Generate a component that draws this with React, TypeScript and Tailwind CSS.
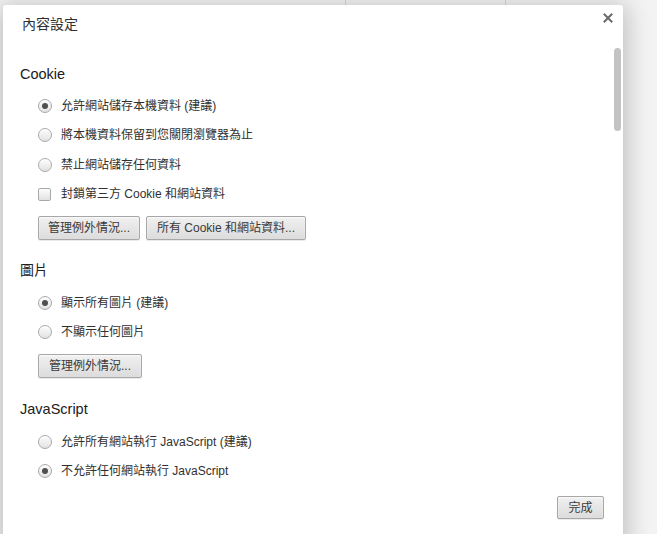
import React from "react";

const FONT = { fontFamily: '"Liberation Sans", Arial, "Noto Sans CJK TC", sans-serif' };

function Radio({ checked, label }: { checked?: boolean; label: string }) {
  return (
    <div className="flex h-[29.5px] items-center pl-[18px]">
      <span className="flex h-[14px] w-[14px] items-center justify-center rounded-full border border-[#a9a9a9] bg-gradient-to-b from-[#fdfdfd] to-[#e2e2e2] shadow-[inset_0_1px_1px_rgba(255,255,255,0.9)]">
        {checked && <span className="h-[6px] w-[6px] rounded-full bg-[#4f4f4f]" />}
      </span>
      <span className="ml-[9px] text-[12px] text-[#303030]">{label}</span>
    </div>
  );
}

function Checkbox({ label }: { label: string }) {
  return (
    <div className="flex h-[29.5px] items-center pl-[18px]">
      <span className="h-[13px] w-[13px] rounded-[2px] border border-[#a9a9a9] bg-gradient-to-b from-[#fdfdfd] to-[#e2e2e2]" />
      <span className="ml-[10px] text-[12px] text-[#303030]">{label}</span>
    </div>
  );
}

function Btn({ children, w, h }: { children: React.ReactNode; w: string; h?: string }) {
  return (
    <button
      className={`flex items-center justify-center whitespace-nowrap rounded-[2px] border border-[#a7a7a7] bg-gradient-to-b from-[#f0f0f0] to-[#dcdcdc] px-0 text-[12px] text-[#3a3a3a] shadow-[0_1px_0_rgba(0,0,0,0.08),inset_0_1px_2px_rgba(255,255,255,0.75)] ${w} ${h ?? "h-[24px]"}`}
    >
      {children}
    </button>
  );
}

export default function App() {
  return (
    <div
      className="relative h-[534px] w-[657px] overflow-hidden bg-[#f3f3f3] pl-[3px] pt-[5px]"
      style={FONT}
    >
      <div className="absolute left-[345px] top-0 h-[5px] w-px bg-[#d8d8d8]" />
      <div className="absolute left-[505px] top-0 h-[5px] w-px bg-[#d8d8d8]" />
      <div className="relative h-[540px] w-[620px] rounded-[3px] bg-white shadow-[0_4px_24px_4px_rgba(0,0,0,0.22)]">
        <button className="absolute left-[600px] top-[8px] flex h-[10px] w-[10px] items-center justify-center">
          <svg width="10" height="10" viewBox="0 0 10 10">
            <path d="M1.5 1.5 L8.5 8.5 M8.5 1.5 L1.5 8.5" stroke="#6a6a6a" strokeWidth="2" strokeLinecap="square" />
          </svg>
        </button>
        <div className="absolute left-[611px] top-[43px] h-[83px] w-[7px] rounded-full bg-[#c3c3c3]" />

        <div className="pl-[19px] pt-[10px] text-[14px] leading-[18px] text-[#303030]">內容設定</div>

        <div className="pl-[17px]">
          <div className="mt-[31px] text-[14.5px] leading-[20px] text-[#202020]">Cookie</div>
          <div className="mt-[7px]">
            <Radio checked label="允許網站儲存本機資料 (建議)" />
            <Radio label="將本機資料保留到您關閉瀏覽器為止" />
            <Radio label="禁止網站儲存任何資料" />
            <Checkbox label="封鎖第三方 Cookie 和網站資料" />
          </div>
          <div className="mt-[7px] flex gap-[6px] pl-[18px]">
            <Btn w="w-[102px]">管理例外情況...</Btn>
            <Btn w="w-[160px]">所有 Cookie 和網站資料...</Btn>
          </div>

          <div className="mt-[20px] text-[14px] leading-[20px] text-[#202020]">圖片</div>
          <div className="mt-[8px]">
            <Radio checked label="顯示所有圖片 (建議)" />
            <Radio label="不顯示任何圖片" />
          </div>
          <div className="mt-[7px] flex pl-[18px]">
            <Btn w="w-[104px]">管理例外情況...</Btn>
          </div>

          <div className="mt-[21px] text-[14.5px] leading-[20px] text-[#202020]">JavaScript</div>
          <div className="mt-[8px]">
            <Radio label="允許所有網站執行 JavaScript (建議)" />
            <Radio checked label="不允許任何網站執行 JavaScript" />
          </div>
        </div>

        <div className="absolute left-[554px] top-[491px]">
          <Btn w="w-[47px]" h="h-[23px]">完成</Btn>
        </div>
      </div>
    </div>
  );
}
